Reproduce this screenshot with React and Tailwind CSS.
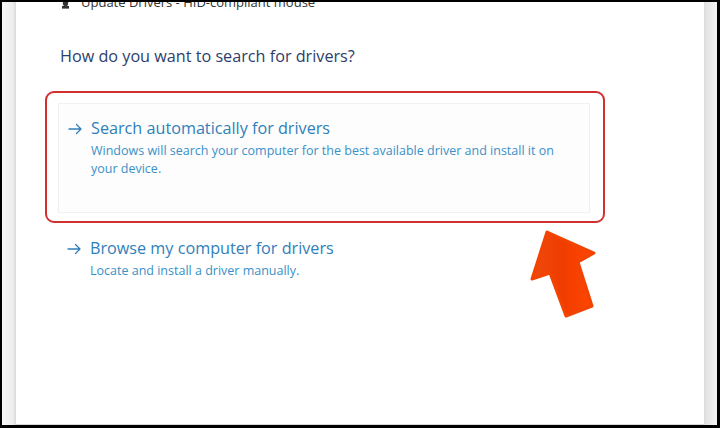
const font = { fontFamily: '"Open Sans", "Noto Sans", sans-serif' };

const Arrow = () => (
  <svg width="23" height="14" viewBox="0 0 23 14" className="mt-[6px] shrink-0">
    <path d="M1 7h12M8.5 2.5L13 7l-4.5 4.5" fill="none" stroke="#2f7fba" strokeWidth="1.3" strokeLinecap="round" strokeLinejoin="round" />
  </svg>
);

const Option = ({ title, desc }) => (
  <div className="flex items-start">
    <Arrow />
    <div>
      <div className="text-[16.2px] leading-[24px] text-[#2f7fba]">{title}</div>
      <div className="mt-[2px] text-[12.5px] leading-[18px] text-[#3a90c8] max-w-[478px]">{desc}</div>
    </div>
  </div>
);

const App = () => {
  return (
    <div className="w-[720px] h-[428px] border-t-2 border-l-2 border-b-[3px] border-r-[3px] border-black bg-white overflow-hidden" style={font}>
      <div className="flex h-full">
        {/* left window shadow */}
        <div className="w-[14px] shrink-0 bg-gradient-to-r from-[#f7f7f7] to-[#ececec] border-r-2 border-[#dedede]"></div>

        {/* dialog body */}
        <div className="relative flex-1 bg-white border-b border-[#d8d8d8]">
          <div className="-mt-[9px] ml-[46px] flex items-center gap-[12px] text-[13px] text-[#333]">
            <svg width="7" height="13" viewBox="0 0 8 14">
              <rect x="1" y="0" width="6" height="11" rx="3" fill="#333" />
              <rect x="0" y="11" width="8" height="3" fill="#333" />
            </svg>
            <span>Update Drivers - HID-compliant mouse</span>
          </div>

          <h1 className="mt-[31px] ml-[44px] text-[16.2px] leading-[24px] text-[#2c3e6b]">
            How do you want to search for drivers?
          </h1>

          <div className="mt-[23px] ml-[29px] w-[560px] h-[132px] rounded-[9px] border-2 border-[#d32f2f] pt-[10px] pl-[11px] pr-[13px] pb-[8px]">
            <div className="h-full border border-[#edf1f4] bg-[#fdfdfd] pt-[12px] pl-[9px]">
              <Option
                title="Search automatically for drivers"
                desc="Windows will search your computer for the best available driver and install it on your device."
              />
            </div>
          </div>

          <div className="mt-[13px] ml-[51px]">
            <Option title="Browse my computer for drivers" desc="Locate and install a driver manually." />
          </div>

          {/* annotation arrow */}
          <svg className="absolute left-[494px] top-[223px]" width="100" height="100" viewBox="510 225 100 100">
            <defs>
              <linearGradient id="ag" x1="0" y1="0" x2="1" y2="0">
                <stop offset="0" stopColor="#ef4a0c" />
                <stop offset="0.5" stopColor="#f03c00" />
                <stop offset="1" stopColor="#ff4800" />
              </linearGradient>
            </defs>
            <polygon
              points="547,232 594,253 578,262 592,306 566,316 550,273 532,279"
              fill="url(#ag)"
              stroke="#f24400"
              strokeWidth="3"
              strokeLinejoin="round"
            />
          </svg>
        </div>

        {/* right window shadow */}
        <div className="w-[13px] shrink-0 bg-gradient-to-r from-[#e2e2e2] to-[#f4f4f4] border-l border-[#dcdcdc]"></div>
      </div>
    </div>
  );
};

export default App;
